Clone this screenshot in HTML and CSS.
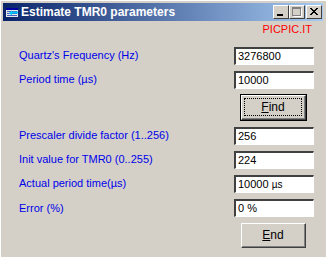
FILE: index.html
```html
<!DOCTYPE html>
<html>
<head>
<meta charset="utf-8">
<title>Estimate TMR0 parameters</title>
<link rel="stylesheet" href="styles.css">
</head>
<body>
<div class="window">
  <div class="titlebar">
    <svg class="appicon" width="12" height="9" viewBox="0 0 12 9">
      <rect x="0" y="0" width="12" height="9" fill="#e8e8e8"/>
      <rect x="0" y="0" width="12" height="2" fill="#0000a0"/>
      <path d="M1 3.5h10M1 5.5h10M1 7.5h10" stroke="#4060c0" stroke-width="1"/>
      <path d="M5 4.5h7" stroke="#00c8ff" stroke-width="2"/>
      <path d="M3 5l3-2.5v5z" fill="#00c8ff"/>
    </svg>
    <span class="title">Estimate TMR0 parameters</span>
    <div class="caption-btns">
      <span class="cbtn"><svg width="16" height="14" viewBox="0 0 16 14"><rect x="4" y="9" width="6" height="2" fill="#000"/></svg></span>
      <span class="cbtn"><svg width="16" height="14" viewBox="0 0 16 14"><rect x="3.5" y="2.5" width="8" height="8" fill="none" stroke="#808080"/><rect x="3" y="2" width="9" height="2" fill="#808080"/><path d="M4.5 11.5h8v-8" stroke="#fff" fill="none"/></svg></span>
      <span class="cbtn close"><svg width="16" height="14" viewBox="0 0 16 14"><path d="M4 3l7 7M5 3l7 7M11 3l-7 7M12 3l-7 7" stroke="#000" stroke-width="1"/></svg></span>
    </div>
  </div>
  <div class="brand">PICPIC.IT</div>
  <div class="form">
    <div class="row r1"><span class="lbl">Quartz's Frequency (Hz)</span><span class="field">3276800</span></div>
    <div class="row"><span class="lbl">Period time (µs)</span><span class="field">10000</span></div>
    <div class="btnrow"><button class="btn default"><span class="focus"><u>F</u>ind</span></button></div>
    <div class="row"><span class="lbl">Prescaler divide factor (1..256)</span><span class="field">256</span></div>
    <div class="row"><span class="lbl">Init value for TMR0 (0..255)</span><span class="field">224</span></div>
    <div class="row"><span class="lbl">Actual period time(µs)</span><span class="field">10000 <small>µs</small></span></div>
    <div class="row"><span class="lbl lower">Error (%)</span><span class="field">0 %</span></div>
    <div class="btnrow"><button class="btn"><span class="focus plain"><u>E</u>nd</span></button></div>
  </div>
</div>
</body>
</html>
```
FILE: styles.css
```css
body {
margin: 0;
padding: 0;
background: #d4d0c8;
font-family: "Liberation Sans", Arial, sans-serif;
font-size: 11px;
}
.window {
width: 326px;
height: 257px;
box-sizing: border-box;
padding: 3px 3px 0 3px;
background: #d4d0c8;
box-shadow: inset 1px 1px 0 #fff;
overflow: hidden;
}
.titlebar {
height: 18px;
display: flex;
align-items: center;
background: linear-gradient(to right, #0a246a, #a6caf0);
color: #fff;
}
.appicon {
margin-left: 3px;
margin-right: 3px;
}
.title {
font-family: "Liberation Sans", Arial, sans-serif;
font-weight: bold;
font-size: 12px;
}
.caption-btns {
margin-left: auto;
margin-right: 1px;
display: flex;
}
.cbtn {
width: 16px;
height: 14px;
box-sizing: border-box;
background: #d4d0c8;
border-top: 1px solid #fff;
border-left: 1px solid #fff;
border-right: 1px solid #404040;
border-bottom: 1px solid #404040;
display: flex;
}
.cbtn svg {
margin: -1px;
}
.cbtn.close {
margin-left: 1px;
}
.brand {
color: #ff0000;
text-align: right;
padding-right: 11px;
margin-top: 1px;
height: 16px;
line-height: 14px;
font-size: 11px;
}
.form {
display: flex;
flex-direction: column;
padding-left: 16px;
}
.row {
display: flex;
align-items: center;
height: 18px;
margin-bottom: 6px;
}
.r1 {
margin-top: 9px;
}
.lbl {
color: #0000e8;
width: 215px;
position: relative;
top: -1px;
}
.lbl.lower {
top: 0;
}
.field {
width: 80px;
height: 18px;
box-sizing: border-box;
background: #fff;
color: #000;
border-top: 2px solid #404040;
border-left: 2px solid #404040;
border-right: 1px solid #fff;
border-bottom: 1px solid #fff;
box-shadow: 1px 1px 0 #d4d0c8;
padding-left: 2px;
line-height: 15px;
font-size: 11px;
}
.field small {
font-size: 10px;
}
.btnrow {
display: flex;
padding-left: 222px;
margin-bottom: 7px;
}
.btn {
width: 65px;
height: 25px;
box-sizing: border-box;
background: #d4d0c8;
border-top: 1px solid #fff;
border-left: 1px solid #fff;
border-right: 1px solid #404040;
border-bottom: 1px solid #404040;
box-shadow: inset -1px -1px 0 #808080;
padding: 2px 3px 3px 2px;
font-family: "Liberation Sans", Arial, sans-serif;
font-size: 12px;
color: #000;
display: flex;
}
.btn.default {
outline: 1px solid #000;
outline-offset: 0;
}
.focus {
flex: 1;
border: 1px dotted #000;
display: flex;
align-items: center;
justify-content: center;
}
.focus.plain {
border-color: transparent;
}
```
